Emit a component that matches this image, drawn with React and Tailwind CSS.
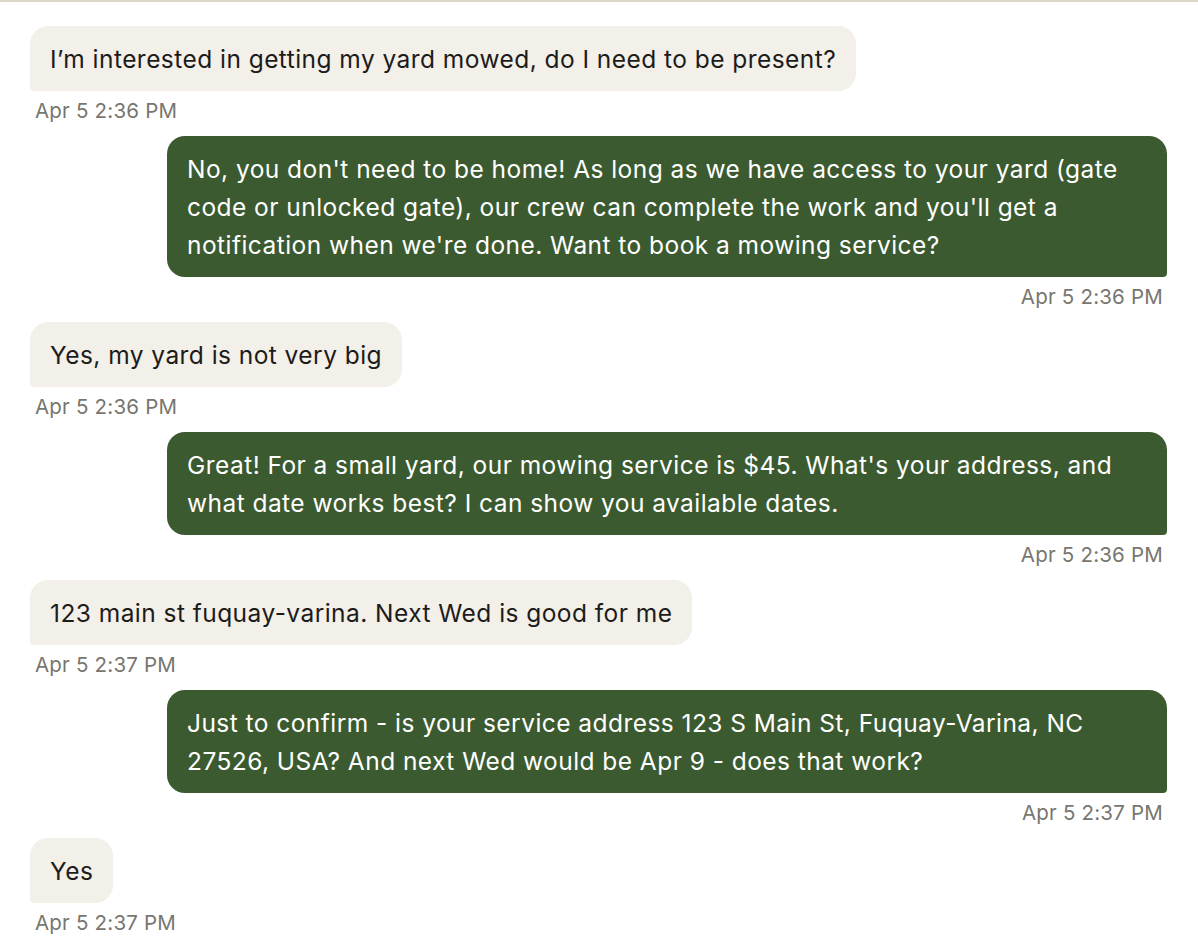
import React from "react";

const messages = [
  { from: "user", text: "I’m interested in getting my yard mowed, do I need to be present?", time: "Apr 5 2:36 PM" },
  { from: "bot", text: "No, you don't need to be home! As long as we have access to your yard (gate code or unlocked gate), our crew can complete the work and you'll get a notification when we're done. Want to book a mowing service?", time: "Apr 5 2:36 PM" },
  { from: "user", text: "Yes, my yard is not very big", time: "Apr 5 2:36 PM" },
  { from: "bot", text: "Great! For a small yard, our mowing service is $45. What's your address, and what date works best? I can show you available dates.", time: "Apr 5 2:36 PM" },
  { from: "user", text: "123 main st fuquay-varina. Next Wed is good for me", time: "Apr 5 2:37 PM" },
  { from: "bot", text: "Just to confirm - is your service address 123 S Main St, Fuquay-Varina, NC 27526, USA? And next Wed would be Apr 9 - does that work?", time: "Apr 5 2:37 PM" },
  { from: "user", text: "Yes", time: "Apr 5 2:37 PM" },
];

export default function App() {
  return (
    <div className="min-h-screen bg-white border-t-2 border-[#dcd8c6]" style={{ fontFamily: "Inter, 'Noto Sans', sans-serif" }}>
      <div className="flex flex-col pl-[30px] pr-[31px] pt-[24px]">
        {messages.map((m, i) =>
          m.from === "user" ? (
            <div key={i} className="flex flex-col items-start mb-[11px]">
              <div className="max-w-[1000px] bg-[#f3efe9] text-[#1c1c1a] text-[24.5px] tracking-[0.45px] leading-[38px] px-[20px] pt-[14px] pb-[13px] rounded-[18px] rounded-bl-[4px]">
                {m.text}
              </div>
              <div className="mt-[6px] pl-[5px] text-[20.5px] tracking-[0.2px] leading-[28px] text-[#77766f]">{m.time}</div>
            </div>
          ) : (
            <div key={i} className="flex flex-col items-end mb-[11px]">
              <div className="max-w-[1000px] bg-[#3b5a30] text-white text-[24.5px] tracking-[0.45px] leading-[38px] px-[20px] pt-[14px] pb-[13px] rounded-[18px] rounded-br-[4px]">
                {m.text}
              </div>
              <div className="mt-[6px] pr-[4px] text-[20.5px] tracking-[0.2px] leading-[28px] text-[#77766f]">{m.time}</div>
            </div>
          )
        )}
      </div>
    </div>
  );
}
